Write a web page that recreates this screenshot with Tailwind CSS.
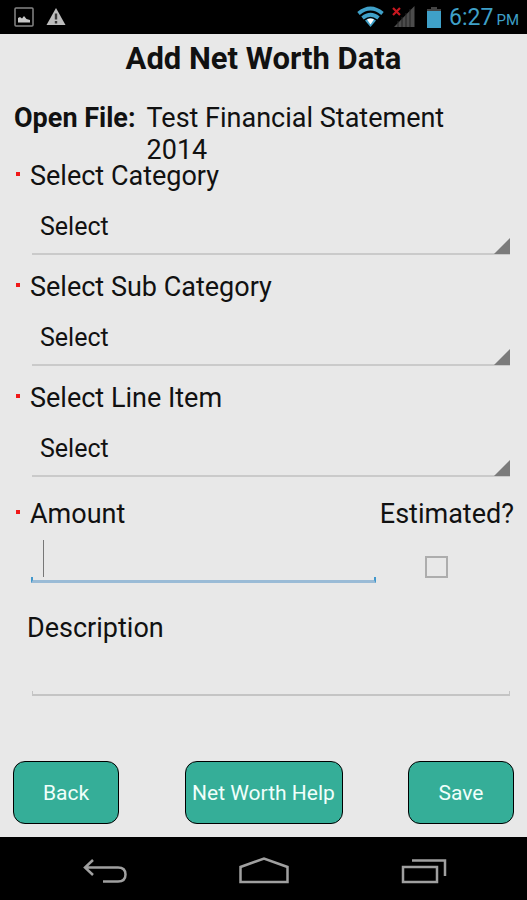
<!DOCTYPE html>
<html lang="en">
<head>
<meta charset="utf-8">
<meta name="viewport" content="width=device-width, initial-scale=1">
<title>Add Net Worth Data</title>
<script src="https://cdn.jsdelivr.net/npm/@tailwindcss/browser@4"></script>
</head>
<body class="flex min-h-screen flex-col bg-[#e8e8e8] font-[Roboto,sans-serif] text-[27px] leading-8 text-[#111111]">

<!-- Status bar -->
<header class="flex h-[34px] items-center bg-black pr-2 pl-[14px] text-[#3fa0c8]">
  <svg class="h-5 w-5" viewBox="0 0 20 20" role="img" aria-label="Screenshot saved"><rect x="1" y="1" width="18" height="18" rx="1" fill="none" stroke="#858585" stroke-width="1.5"/><path d="M4 15.500v-4.500l2-1 2 1.500 2-2.500 2.500 3 3.500 1v2.500z" fill="#c8c8c8"/></svg>
  <svg class="ml-3 h-5 w-5" viewBox="0 0 20 20" role="img" aria-label="Warning"><path d="M10 1 19.500 18H.5z" fill="#bdbdbd"/><path d="M8.800 6.500h2.400v6H8.800zM8.800 14h2.400v2.500H8.800z" fill="#3a3a3a"/></svg>
  <svg class="ml-auto h-[22px] w-[27px]" viewBox="0 0 27 22" role="img" aria-label="Wi-Fi"><g fill="none" stroke="#3fa0c8" stroke-width="3.800"><path d="M1.500 7.500Q13.500-2.500 25.500 7.500"/><path d="M5.500 12q8-6.500 16 0"/></g><path d="M8 14.500q5.500-4.500 11 0L13.500 21z" fill="#3fa0c8"/><path d="M10 13.500q3.500-2 7 0L13.500 18.500z" fill="#fff"/></svg>
  <svg class="ml-2 h-[22px] w-[23px]" viewBox="0 0 23 22" role="img" aria-label="No signal"><path d="M2 21 22.500 0v21z" fill="#4c4c4c"/><path d="M6 15v6M10 11v10M14 7v14M18 3v18" stroke="#222" stroke-width="1"/><path d="m1 2 7 7M8 2 1 9" stroke="#c81820" stroke-width="2.200"/></svg>
  <svg class="ml-3 h-[21px] w-[14px]" viewBox="0 0 14 21" role="img" aria-label="Battery"><path d="M4 0h6v2h4v3H0V2h4z" fill="#444"/><path d="M0 4h14v17H0z" fill="#3fa0c8"/></svg>
  <p class="ml-2 flex items-baseline gap-[3px] pt-1 text-[23px]"><span>6:27</span><span class="text-[15px]">PM</span></p>
</header>

<main class="flex flex-1 flex-col pt-[9px]">
  <h1 class="text-center text-[31px] font-bold">Add Net Worth Data</h1>
  <div class="mt-[27px] flex gap-[11px] pr-10 pl-[14px]">
    <p class="shrink-0 font-bold">Open File:</p>
    <p>Test Financial Statement 2014</p>
  </div>

  <form id="net-worth" class="flex flex-col gap-[22px]">
    <div>
      <label for="category" class="flex items-center gap-[10px] pl-4 leading-5"><span class="mb-1 size-1 shrink-0 bg-[#f01818]"></span>Select Category</label>
      <div class="relative mr-[17px] mt-[14px] ml-8">
        <select id="category" class="h-[55px] w-full appearance-none border-b-2 border-[#cacaca] pl-2 text-[25px] outline-none"><option>Select</option></select>
        <svg class="pointer-events-none absolute right-0 bottom-px size-4" viewBox="0 0 16 16" aria-hidden="true"><path d="M16 0v16H0z" fill="#7b7b7b"/></svg>
      </div>
    </div>
    <div>
      <label for="subcategory" class="flex items-center gap-[10px] pl-4 leading-5"><span class="mb-1 size-1 shrink-0 bg-[#f01818]"></span>Select Sub Category</label>
      <div class="relative mr-[17px] mt-[14px] ml-8">
        <select id="subcategory" class="h-[55px] w-full appearance-none border-b-2 border-[#cacaca] pl-2 text-[25px] outline-none"><option>Select</option></select>
        <svg class="pointer-events-none absolute right-0 bottom-px size-4" viewBox="0 0 16 16" aria-hidden="true"><path d="M16 0v16H0z" fill="#7b7b7b"/></svg>
      </div>
    </div>
    <div>
      <label for="line-item" class="flex items-center gap-[10px] pl-4 leading-5"><span class="mb-1 size-1 shrink-0 bg-[#f01818]"></span>Select Line Item</label>
      <div class="relative mr-[17px] mt-[14px] ml-8">
        <select id="line-item" class="h-[55px] w-full appearance-none border-b-2 border-[#cacaca] pl-2 text-[25px] outline-none"><option>Select</option></select>
        <svg class="pointer-events-none absolute right-0 bottom-px size-4" viewBox="0 0 16 16" aria-hidden="true"><path d="M16 0v16H0z" fill="#7b7b7b"/></svg>
      </div>
    </div>
  </form>

  <div class="mt-[27px] flex justify-between pr-[13px]">
    <div class="flex-1">
      <label for="amount" class="flex items-center gap-[10px] pl-4 leading-5"><span class="mb-1 size-1 shrink-0 bg-[#f01818]"></span>Amount</label>
      <div class="relative mt-[14px] ml-[31px]">
        <input id="amount" form="net-worth" type="text" inputmode="decimal" class="block h-[39px] w-full px-3 caret-transparent outline-none">
        <span class="absolute top-[2px] left-3 h-[37px] w-px bg-[#777777]"></span>
        <div class="h-[6px] border-x-2 border-b-[3px] border-x-[#4298cc] border-b-[#9abbd6]"></div>
      </div>
    </div>
    <div class="ml-1 flex flex-col items-center">
      <label for="estimated" class="leading-5">Estimated?</label>
      <input id="estimated" form="net-worth" type="checkbox" class="mt-8 mr-5 h-[22px] w-[23px] appearance-none border-2 border-[#adadad]">
    </div>
  </div>

  <div class="mt-[35px] pr-[17px] pl-[27px]">
    <label for="description" class="block leading-5">Description</label>
    <div class="ml-[5px]">
      <input id="description" form="net-worth" type="text" class="mt-2 block h-[45px] w-full px-3 outline-none">
      <div class="h-[5px] border-x border-b-2 border-[#c4c4c4]"></div>
    </div>
  </div>

  <div class="mt-auto flex justify-between px-[13px] pb-[13px] text-[21px] text-[#f0fffb]">
    <button type="button" class="h-[63px] w-[106px] rounded-xl border border-black bg-[#35ae98]">Back</button>
    <button type="button" class="h-[63px] w-[158px] rounded-xl border border-black bg-[#35ae98] whitespace-nowrap">Net Worth Help</button>
    <button type="submit" form="net-worth" class="h-[63px] w-[106px] rounded-xl border border-black bg-[#35ae98]">Save</button>
  </div>
</main>

<nav class="flex h-[63px] items-center justify-center gap-28 bg-black pt-1">
  <button type="button" aria-label="Back"><svg class="h-7 w-[46px]" viewBox="0 0 46 28"><path d="M12 3 4 10.500l8 7.500M4 10.500h33q7.500 0 7.500 7t-7.500 7H22" fill="none" stroke="#a0a0a0" stroke-width="2.500"/></svg></button>
  <button type="button" aria-label="Home"><svg class="h-7 w-[50px]" viewBox="0 0 50 28"><path d="M1.500 25V10L25 1.500 48.500 10v15z" fill="none" stroke="#a0a0a0" stroke-width="2.500"/></svg></button>
  <button type="button" aria-label="Recent apps"><svg class="h-7 w-[46px]" viewBox="0 0 46 28"><path d="M2 10h34v15H2zM11 3.500h33V19" fill="none" stroke="#a0a0a0" stroke-width="2.500"/></svg></button>
</nav>
</body>
</html>
